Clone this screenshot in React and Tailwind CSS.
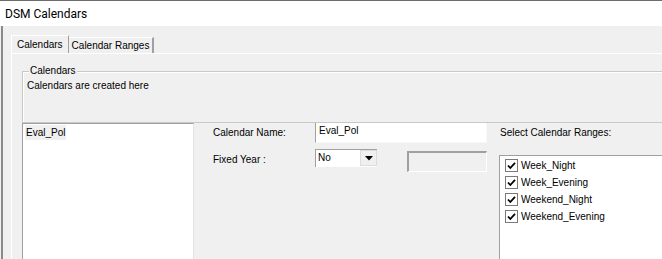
import React from "react";

const ranges = ["Week_Night", "Week_Evening", "Weekend_Night", "Weekend_Evening"];

const Check = () => (
  <span className="w-[13px] h-[13px] border border-[#7a7a7a] bg-white flex items-center justify-center shrink-0">
    <svg width="9" height="9" viewBox="0 0 9 9">
      <path d="M1 4.5 L3.3 7 L8 1.8" stroke="#000" strokeWidth="1.8" fill="none" />
    </svg>
  </span>
);

export default function App() {
  return (
    <div
      className="w-[662px] h-[259px] overflow-hidden bg-[#f0f0f0] text-[10px] text-black"
      style={{ fontFamily: "'Liberation Sans', Arial, sans-serif" }}
    >
      <div className="h-[26px] bg-white border-t border-[#6d6d6d] flex items-center pl-[5px]">
        <span className="text-[12px]" style={{ fontFamily: "Roboto, 'Liberation Sans', sans-serif" }}>
          DSM Calendars
        </span>
      </div>
      <div className="border-l-2 border-[#8a8a8a] h-[233px] pl-[8px] pt-[9px] ml-[1px] overflow-hidden">
        <div className="flex h-[18px] items-end">
          <div className="h-[18px] px-[5px] flex items-center border-l border-t border-white border-r border-r-[#a0a0a0] bg-[#f0f0f0]">
            Calendars
          </div>
          <div className="h-[16px] px-[3px] flex items-center border-t border-white border-r-2 border-r-[#a0a0a0]">
            Calendar Ranges
          </div>
        </div>
        <div className="border-l border-t border-white h-full pl-[10px] pt-[17px]">
          <div className="border border-[#c8c8c8] shadow-[inset_1px_1px_0_#fff] h-[52px] pl-[4px] relative -mr-[10px]">
            <span className="absolute -top-[8px] left-[6px] bg-[#f0f0f0] px-[1px] leading-[14px]">Calendars</span>
            <div className="pt-[6px]">Calendars are created here</div>
          </div>
          <div className="flex w-[700px]">
            <div className="shrink-0 w-[172px] h-[140px] bg-white border-l border-t border-[#a0a0a0] border-r border-r-[#e3e3e3] pt-[1px] pl-[2px]">
              <span className="inline-block bg-[#f0f0f0] px-[1px] leading-[15px]">Eval_Pol</span>
            </div>
            <div className="shrink-0 ml-[19px] w-[274px] flex flex-col">
              <div className="flex items-center h-[21px] mt-[-1px]">
                <span className="w-[102px]">Calendar Name:</span>
                <div className="w-[172px] h-[21px] bg-white border-l border-t border-[#a0a0a0] border-r border-b border-r-[#f8f8f8] border-b-[#f8f8f8] pl-[3px] pt-[1px] leading-[14px]">
                  Eval_Pol
                </div>
              </div>
              <div className="flex items-start mt-[6px]">
                <span className="w-[102px] mt-[3px]">Fixed Year :</span>
                <div className="w-[62px] h-[18px] bg-white border-l border-t border-[#a0a0a0] flex">
                  <span className="flex-1 pl-[2px] leading-[15px]">No</span>
                  <span className="w-[17px] h-[16px] border border-[#dcdcdc] bg-[#f0f0f0] flex items-center justify-center">
                    <svg width="8" height="5" viewBox="0 0 8 5">
                      <path d="M0 0 H8 L4 4.5 Z" fill="#000" />
                    </svg>
                  </span>
                </div>
                <div className="ml-[30px] mt-[2px] w-[80px] h-[21px] border-l-2 border-t-2 border-[#a0a0a0] border-r border-b border-r-white border-b-white bg-[#f0f0f0]" />
              </div>
            </div>
            <div className="shrink-0 ml-[12px] flex flex-col">
              <div className="h-[21px] flex items-center mt-[-1px] ml-[1px]">Select Calendar Ranges:</div>
              <div className="mt-[12px] w-[170px] h-[110px] bg-white border-l border-t border-[#a0a0a0] pt-[3px] pl-[5px] flex flex-col gap-[4px]">
                {ranges.map((r) => (
                  <div key={r} className="flex items-center gap-[3px] h-[13px]">
                    <Check />
                    <span>{r}</span>
                  </div>
                ))}
              </div>
            </div>
          </div>
        </div>
      </div>
    </div>
  );
}
